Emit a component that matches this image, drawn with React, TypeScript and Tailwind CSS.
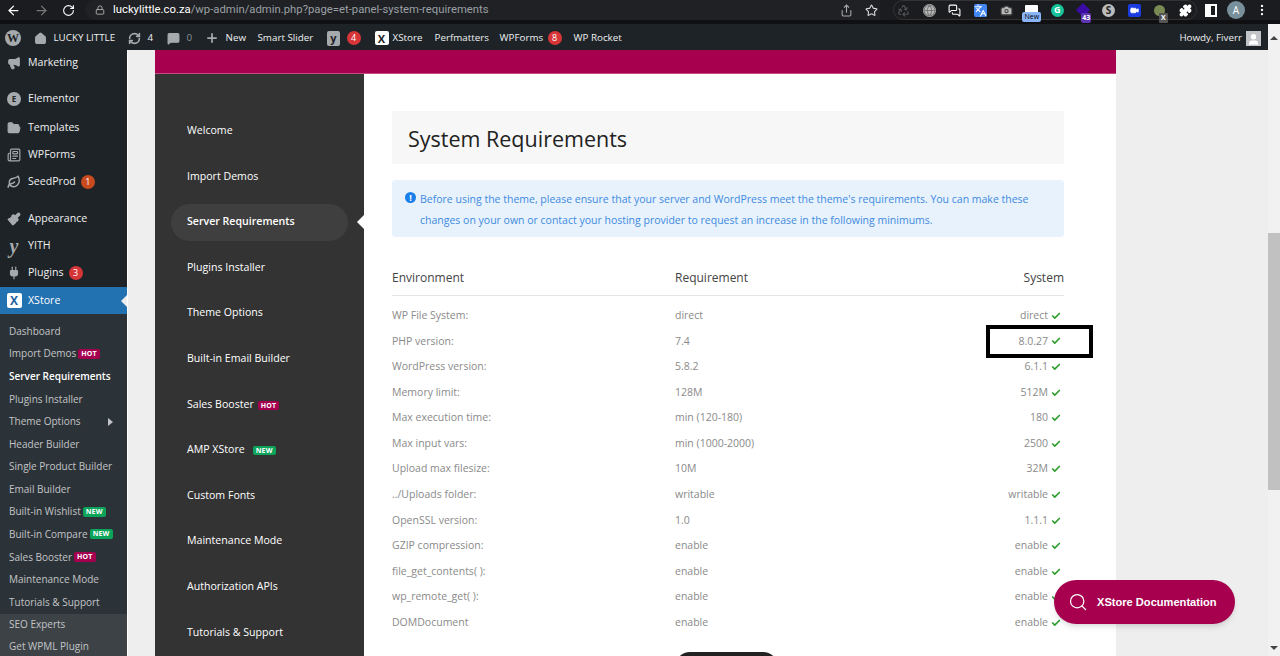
import { ArrowLeft, ArrowRight, RotateCw, Lock, Share, Star, Recycle, Globe, MessagesSquare, Languages, Camera, Puzzle, Home, RefreshCw, MessageSquare, Plus, Megaphone, FolderOpen, Newspaper, Leaf, Paintbrush, Plug, Search, Check, MoreVertical, Video, User } from "lucide-react";
import type { ReactNode } from "react";

const font = "font-['Open_Sans','Noto_Sans',sans-serif]";

function Badge({ n, color = "bg-[#d63638]" }: { n: string; color?: string }) {
  return (
    <span className={`flex h-[14px] w-[14px] items-center justify-center rounded-full text-[9px] text-white ${color}`}>
      {n}
    </span>
  );
}

function Tag({ label, hot }: { label: string; hot?: boolean }) {
  return (
    <span className={`ml-[2px] rounded-[2px] px-[3px] text-[7px] leading-[10px] font-bold tracking-wide text-white ${hot ? "bg-[#a4004f]" : "bg-[#0ca35a]"}`}>
      {label}
    </span>
  );
}

function XLogo({ size = 14, color = "text-[#222]" }: { size?: number; color?: string }) {
  return (
    <span
      className={`flex items-center justify-center rounded-[2px] bg-white font-bold leading-none ${color}`}
      style={{ width: size, height: size, fontSize: size - 3 }}
    >
      X
    </span>
  );
}

function BrowserBar() {
  const iconClass = "h-[13px] w-[13px] text-[#b8b8b8]";
  const slot = "flex w-[25.6px] shrink-0 justify-center";
  return (
    <div className="flex h-6 flex-col bg-[#101012]">
      <div className="flex h-[20px] items-center bg-[#1b1c1f]">
        <div className="flex w-[85px] shrink-0 items-center pl-[6px] text-white">
          <ArrowLeft size={15} />
          <ArrowRight size={15} className="ml-[13px] text-[#777]" />
          <RotateCw size={13} className="ml-[13px]" />
        </div>
        <div className="flex h-[20px] w-[795px] shrink-0 items-center rounded-l-full bg-[#202124] pl-[10px]">
          <Lock size={10} className="text-[#bbb]" />
          <span className="ml-[8px] font-['Roboto',sans-serif] text-[11.3px] text-[#9aa0a6]">
            <span className="text-white">luckylittle.co.za</span>/wp-admin/admin.php?page=et-panel-system-requirements
          </span>
          <div className="ml-auto flex gap-[12px] pr-[2px]">
            <Share size={13} className="text-[#aaa]" />
            <Star size={13} className="text-[#ddd]" />
          </div>
        </div>
        <div className="ml-[13px] flex h-[20px] w-[304px] shrink-0 items-center rounded-full border border-[#333]">
          <div className="-ml-[3px] flex items-center">
            <span className={slot}><Recycle className="h-[13px] w-[13px] text-[#555]" /></span>
            <span className={slot}><Globe className="h-[13px] w-[13px] rounded-full bg-[#b8b8b8] text-[#777]" /></span>
            <span className={slot}><MessagesSquare className="h-[13px] w-[13px] text-white" /></span>
            <span className={slot}><Languages className="h-[13px] w-[13px] rounded-[2px] bg-[#4285f4] text-white" /></span>
            <span className={slot}><Camera className={`${iconClass} fill-[#b8b8b8] stroke-[#444]`} /></span>
            <span className={`${slot} relative`}>
              <span className="h-[10px] w-[13px] rounded-[1px] bg-white" />
              <span className="absolute top-[7px] rounded-[2px] bg-[#8ab4f8] px-[2px] text-[7px] leading-[10px] text-black">New</span>
            </span>
            <span className={slot}>
              <span className="flex h-[13px] w-[13px] items-center justify-center rounded-full bg-[#15c39a] text-[9px] font-bold text-white">G</span>
            </span>
            <span className={`${slot} relative`}>
              <span className="h-[10px] w-[10px] rotate-45 bg-[#3a0ca3]" />
              <span className="absolute top-[8px] left-[11px] rounded-[2px] bg-[#5e35b1] px-[1px] text-[7px] leading-[10px] font-bold text-white">43</span>
            </span>
            <span className={slot}>
              <span className="flex h-[13px] w-[13px] items-center justify-center rounded-full bg-[#bbb] text-[10px] font-bold text-[#222]">S</span>
            </span>
            <span className={slot}>
              <span className="flex h-[13px] w-[13px] items-center justify-center rounded-[2px] bg-[#1a3be0]"><Video size={9} className="fill-white text-white" /></span>
            </span>
            <span className={`${slot} relative`}>
              <span className="h-[11px] w-[11px] rounded-full bg-[#7a8a55]" />
              <span className="absolute top-[8px] left-[12px] rounded-[1px] bg-[#555] px-[2px] text-[7px] leading-[10px] font-bold text-white">X</span>
            </span>
            <span className={slot}><Puzzle className="h-[13px] w-[13px] fill-white text-white" /></span>
          </div>
        </div>
        <span className="ml-[1px] flex w-[25px] shrink-0 justify-center">
          <span className="h-[13px] w-[12px] border-2 border-white bg-[linear-gradient(90deg,#fff_50%,transparent_50%)]" />
        </span>
        <span className="flex w-[26px] shrink-0 justify-center">
          <span className="flex h-[18px] w-[18px] items-center justify-center rounded-full bg-[#78909c] text-[10px] text-white">A</span>
        </span>
        <MoreVertical size={14} className="ml-[6px] text-white" />
      </div>
    </div>
  );
}

function AdminBar() {
  return (
    <div className={`flex h-[26px] w-[1268px] items-center bg-[#1d2327] pt-[2px] text-[9.8px] text-[#f0f0f1] ${font}`}>
      <span className="ml-[5px] flex h-[16px] w-[16px] items-center justify-center rounded-full bg-[#a7aaad] font-['Liberation_Serif',serif] text-[12px] font-bold text-[#1d2327]">W</span>
      <Home size={13} className="ml-[12.5px] fill-[#a7aaad] text-[#a7aaad]" />
      <span className="ml-[7px] w-[62px] whitespace-nowrap">LUCKY LITTLE</span>
      <RefreshCw size={13} strokeWidth={3} className="ml-[12.5px] text-[#a7aaad]" />
      <span className="ml-[6.5px] w-[6px]">4</span>
      <MessageSquare size={13} className="ml-[13.5px] fill-[#a7aaad] text-[#a7aaad]" />
      <span className="ml-[6.5px] w-[6px] text-[#8c8f94]">0</span>
      <Plus size={14} strokeWidth={3} className="ml-[12px] text-[#a7aaad]" />
      <span className="ml-[7px] w-[21px]">New</span>
      <span className="ml-[11px] w-[56px] whitespace-nowrap">Smart Slider</span>
      <span className="ml-[13.5px] flex h-[15px] w-[13px] items-center justify-center rounded-[2px] bg-[#a7aaad] text-[11px] font-bold text-[#1d2327]">y</span>
      <span className="ml-[6.5px]"><Badge n="4" /></span>
      <span className="ml-[14px]"><XLogo /></span>
      <span className="ml-[4px] w-[30px]">XStore</span>
      <span className="ml-[12px] w-[53px]">Perfmatters</span>
      <span className="ml-[12px] w-[44px]">WPForms</span>
      <span className="ml-[4px]"><Badge n="8" /></span>
      <span className="ml-[12px] whitespace-nowrap">WP Rocket</span>
      <span className="ml-auto whitespace-nowrap">Howdy, Fiverr</span>
      <span className="mr-[7px] ml-[4px] flex h-[15px] w-[15px] items-end justify-center bg-[#c3c4c7]">
        <User size={13} className="fill-white text-white" />
      </span>
    </div>
  );
}

type MenuItem = { label: string; icon: ReactNode; badge?: ReactNode; mt?: number };

const mainMenu: MenuItem[] = [
  { label: "Marketing", icon: <Megaphone size={14} className="fill-[#a7aaad] text-[#a7aaad]" />, mt: -1 },
  { label: "Elementor", icon: <span className="flex h-[14px] w-[14px] items-center justify-center rounded-full bg-[#a7aaad] text-[8px] font-bold text-[#1d2327]">E</span>, mt: 9 },
  { label: "Templates", icon: <FolderOpen size={14} className="fill-[#a7aaad] text-[#a7aaad]" />, mt: 2 },
  { label: "WPForms", icon: <Newspaper size={14} className="text-[#a7aaad]" /> },
  { label: "SeedProd", icon: <Leaf size={14} strokeWidth={2.5} className="text-[#a7aaad]" />, badge: <Badge n="1" color="bg-[#ca4a1f]" /> },
  { label: "Appearance", icon: <Paintbrush size={14} className="fill-[#a7aaad] text-[#a7aaad]" />, mt: 10 },
  { label: "YITH", icon: <span className="font-['Liberation_Serif',serif] text-[20px] leading-none font-bold italic text-[#a7aaad]">y</span> },
  { label: "Plugins", icon: <Plug size={14} className="fill-[#a7aaad] text-[#a7aaad]" />, badge: <Badge n="3" /> },
];

const subMenu: { label: string; tag?: "HOT" | "NEW"; active?: boolean; arrow?: boolean }[] = [
  { label: "Dashboard" },
  { label: "Import Demos", tag: "HOT" },
  { label: "Server Requirements", active: true },
  { label: "Plugins Installer" },
  { label: "Theme Options", arrow: true },
  { label: "Header Builder" },
  { label: "Single Product Builder" },
  { label: "Email Builder" },
  { label: "Built-in Wishlist", tag: "NEW" },
  { label: "Built-in Compare", tag: "NEW" },
  { label: "Sales Booster", tag: "HOT" },
  { label: "Maintenance Mode" },
  { label: "Tutorials & Support" },
];

function Sidebar() {
  return (
    <aside className={`flex h-full w-[128px] shrink-0 flex-col overflow-hidden border-r border-white bg-[#1d2327] text-[10.6px] ${font}`}>
      {mainMenu.map((m) => (
        <div key={m.label} className="flex h-[27px] shrink-0 items-center text-[#f0f0f1]" style={{ marginTop: m.mt ?? 0 }}>
          <span className="flex w-[28px] shrink-0 justify-center">{m.icon}</span>
          <span>{m.label}</span>
          {m.badge && <span className="ml-[5px]">{m.badge}</span>}
        </div>
      ))}
      <div className="relative mt-[1px] flex h-[27px] shrink-0 items-center bg-[#2271b1] text-white">
        <span className="flex w-[28px] shrink-0 justify-center"><XLogo size={15} color="text-[#1d5fa0]" /></span>
        <span>XStore</span>
        <span className="absolute top-[8px] right-0 h-0 w-0 border-y-[6px] border-r-[6px] border-y-transparent border-r-[#eeeeee]" />
      </div>
      <div className="shrink-0 bg-[#2c3338] pt-[6px] text-[10px] text-[#c3c4c7]">
        {subMenu.map((s) => (
          <div key={s.label} className={`flex h-[22.58px] items-center pl-[9px] whitespace-nowrap ${s.active ? "font-semibold text-white" : ""}`}>
            {s.label}
            {s.tag && <Tag label={s.tag} hot={s.tag === "HOT"} />}
            {s.arrow && <span className="absolute left-[108px] h-0 w-0 border-y-[4px] border-l-[5px] border-y-transparent border-l-[#c3c4c7]" />}
          </div>
        ))}
      </div>
      <div className="flex-1 bg-[#3c4246] text-[10px] text-[#c3c4c7]">
        <div className="flex h-[22px] items-center pl-[9px]">SEO Experts</div>
        <div className="flex h-[22px] items-center pl-[9px]">Get WPML Plugin</div>
      </div>
    </aside>
  );
}

const panelNav: { label: string; tag?: "HOT" | "NEW"; active?: boolean }[] = [
  { label: "Welcome" },
  { label: "Import Demos" },
  { label: "Server Requirements", active: true },
  { label: "Plugins Installer" },
  { label: "Theme Options" },
  { label: "Built-in Email Builder" },
  { label: "Sales Booster", tag: "HOT" },
  { label: "AMP XStore", tag: "NEW" },
  { label: "Custom Fonts" },
  { label: "Maintenance Mode" },
  { label: "Authorization APIs" },
  { label: "Tutorials & Support" },
];

const rows = [
  ["WP File System:", "direct", "direct"],
  ["PHP version:", "7.4", "8.0.27"],
  ["WordPress version:", "5.8.2", "6.1.1"],
  ["Memory limit:", "128M", "512M"],
  ["Max execution time:", "min (120-180)", "180"],
  ["Max input vars:", "min (1000-2000)", "2500"],
  ["Upload max filesize:", "10M", "32M"],
  ["../Uploads folder:", "writable", "writable"],
  ["OpenSSL version:", "1.0", "1.1.1"],
  ["GZIP compression:", "enable", "enable"],
  ["file_get_contents( ):", "enable", "enable"],
  ["wp_remote_get( ):", "enable", "enable"],
  ["DOMDocument", "enable", "enable"],
];

function PanelNav() {
  return (
    <nav className="flex w-[209px] shrink-0 flex-col bg-[#333333] pt-[34.2px] pr-[16px] pl-[16px] text-[10.6px] text-white">
      {panelNav.map((n) => (
        <div key={n.label} className="relative flex h-[45.6px] shrink-0 items-center">
          {n.active && <span className="absolute right-0 left-0 h-[37px] rounded-full bg-[#3f3f3f]" />}
          <span className={`relative pl-[16px] whitespace-nowrap ${n.active ? "font-semibold" : ""}`}>{n.label}</span>
          {n.tag && (
            <span className={`relative ${n.tag === "HOT" ? "ml-[2px]" : "ml-[6px]"}`}>
              <Tag label={n.tag} hot={n.tag === "HOT"} />
            </span>
          )}
          {n.active && <span className="absolute top-[16px] right-[-16px] h-0 w-0 border-y-[7px] border-r-[7px] border-y-transparent border-r-white" />}
        </div>
      ))}
    </nav>
  );
}

function Requirements() {
  return (
    <section className="flex-1 overflow-hidden bg-white pt-[37px] pr-[52px] pl-[28px]">
      <div className="flex h-[53px] items-center rounded-[2px] bg-[#f7f7f7] pt-[3px] pl-[16px]">
        <h1 className="text-[21.5px] font-medium text-[#222]">System Requirements</h1>
      </div>
      <div className="mt-[16px] flex h-[57px] rounded-[4px] bg-[#e7f2fc] pt-[9px] pl-[13px] text-[10.5px] leading-[20.5px] text-[#3f8ae0]">
        <span className="mt-[3px] flex h-[11px] w-[11px] shrink-0 items-center justify-center rounded-full bg-[#1a7fe8] text-[9px] leading-none font-bold text-white">!</span>
        <p className="ml-[4px] w-[620px]">
          Before using the theme, please ensure that your server and WordPress meet the theme's requirements. You can make these changes on your own or contact your hosting provider to request an increase in the following minimums.
        </p>
      </div>
      <div className="mt-[32px] flex h-[27px] items-start border-b border-[#e5e5e5] text-[12px] text-[#444]">
        <span className="w-[283px]">Environment</span>
        <span>Requirement</span>
        <span className="ml-auto">System</span>
      </div>
      <div className="pt-[7px] text-[10.5px] text-[#8a8a8a]">
        {rows.map(([name, req, sys]) => (
          <div key={name} className="flex h-[25.6px] items-center">
            <span className="w-[283px]">{name}</span>
            <span>{req}</span>
            <span className="ml-auto">{sys}</span>
            <Check size={10} strokeWidth={4} className="mr-[3px] ml-[3px] text-[#2f9e2f]" />
          </div>
        ))}
      </div>
      <div className="mt-[16px] ml-[283px] h-[30px] w-[103px] rounded-full bg-[#222]" />
    </section>
  );
}

export default function App() {
  return (
    <div className={`relative flex h-[656px] w-[1280px] flex-col overflow-hidden bg-[#eeeeee] ${font}`}>
      <BrowserBar />
      <div className="flex min-h-0 flex-1">
        <div className="flex min-w-0 flex-1 flex-col">
          <AdminBar />
          <div className="flex min-h-0 flex-1">
            <Sidebar />
            <main className="ml-[27px] flex w-[961px] shrink-0 flex-col">
              <div className="h-[24px] shrink-0 border-b border-[#c44b80] bg-[#a6004f]" />
              <div className="flex min-h-0 flex-1">
                <PanelNav />
                <Requirements />
              </div>
            </main>
          </div>
        </div>
        {/* Page scrollbar */}
        <div className="flex w-[12px] shrink-0 flex-col items-center bg-[#f1f1f1] pt-[12px]">
          <span className="h-0 w-0 border-x-[4px] border-b-[4px] border-x-transparent border-b-[#444]" />
          <div className="mt-[193px] h-[257px] w-full bg-[#c1c1c1]" />
          <span className="mt-auto mb-[6px] h-0 w-0 border-x-[4px] border-t-[4px] border-x-transparent border-t-[#444]" />
        </div>
      </div>

      {/* Annotation box round the PHP version */}
      <div className="absolute top-[325px] left-[986px] h-[33px] w-[107px] border-4 border-black" />

      {/* Floating documentation button */}
      <div className="absolute top-[580px] left-[1054px] flex h-[44px] w-[181px] items-center rounded-full bg-[#a6004f] pl-[14px] shadow-md">
        <Search size={20} strokeWidth={1.5} className="text-white" />
        <span className="ml-[9px] font-['Liberation_Sans',sans-serif] text-[11.1px] font-bold text-white">XStore Documentation</span>
      </div>
    </div>
  );
}
